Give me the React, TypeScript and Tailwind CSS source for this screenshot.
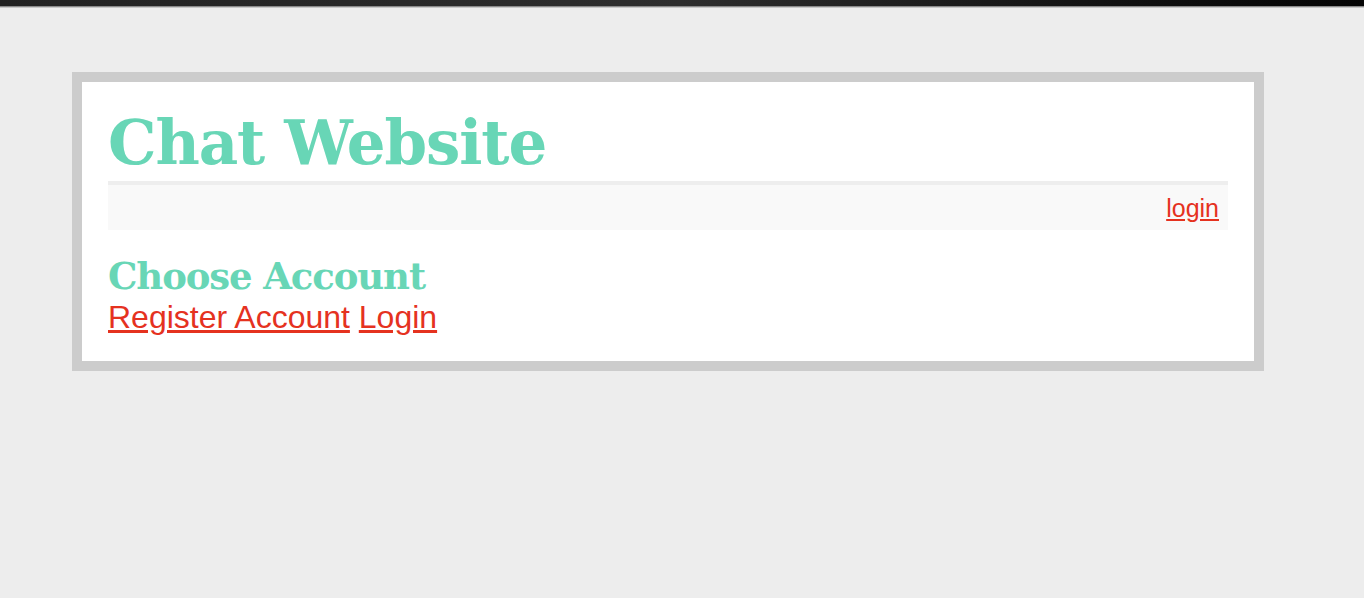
export default function App() {
  return (
    <div className="min-h-screen bg-[#ededed]">
      {/* window chrome strip */}
      <div className="h-[6px] bg-gradient-to-r from-[#222] via-[#2e2e2e] to-[#050505]" />
      <div className="h-px bg-[#8a8a8a]" />
      <div className="h-px bg-[#c8c8c8]" />

      <div className="pt-[64px] pl-[72px]">
        <div className="w-[1192px] border-[10px] border-[#cccccc] bg-white px-[26px] pb-[25px]">
          <h1 className="pt-[27px] h-[99px] font-['DejaVu_Serif',serif] text-[61px] leading-[68px] font-bold text-[#68d6b6] tracking-[-1.1px]">
            Chat Website
          </h1>
          <nav className="border-t-4 border-[#eeeeee] bg-[#f9f9f9] h-[49px] flex items-center justify-end pr-[9px]">
            <a href="#" className="font-['Liberation_Sans',Arial,sans-serif] text-[25px] leading-[30px] text-[#e5321f] underline">
              login
            </a>
          </nav>
          <h2 className="mt-[26px] font-['DejaVu_Serif',serif] text-[37px] leading-[40px] font-bold text-[#68d6b6] tracking-[-1.1px]">
            Choose Account
          </h2>
          <div className="mt-[3px] pb-px font-['Liberation_Sans',Arial,sans-serif] text-[32px] leading-[36px]">
            <a href="#" className="text-[#e5321f] underline">Register Account</a>{' '}
            <a href="#" className="text-[#e5321f] underline">Login</a>
          </div>
        </div>
      </div>
    </div>
  );
}
